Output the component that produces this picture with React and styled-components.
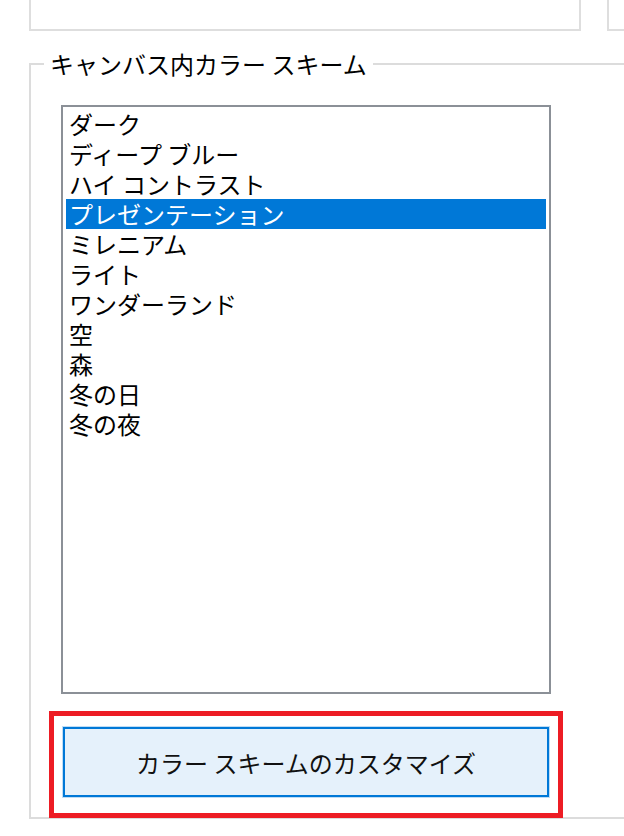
import React from "react";
import styled, { createGlobalStyle } from "styled-components";

const GlobalStyle = createGlobalStyle`
  html, body {
    margin: 0;
    padding: 0;
    background: #ffffff;
  }
  body {
    font-family: "Noto Sans CJK JP", "Noto Sans", sans-serif;
    color: #000000;
  }
`;

const schemes = [
  "ダーク",
  "ディープ ブルー",
  "ハイ コントラスト",
  "プレゼンテーション",
  "ミレニアム",
  "ライト",
  "ワンダーランド",
  "空",
  "森",
  "冬の日",
  "冬の夜"
];

const Page = styled.div`
  width: 624px;
  height: 836px;
  overflow: hidden;
  padding-left: 29px;
  box-sizing: border-box;
`;

const TopRow = styled.div`
  display: flex;
  gap: 26px;
`;

const TopPanel = styled.div`
  flex: 0 0 auto;
  width: ${({ width }) => width}px;
  height: 31px;
  box-sizing: border-box;
  border: 2px solid #dedede;
  border-top: none;
`;

const Group = styled.fieldset`
  margin: 18px -40px 0 0;
  padding: 0;
  border: 2px solid #dcdcdc;
  min-width: 0;
  box-sizing: border-box;
  height: 770px;
`;

const Legend = styled.legend`
  margin-left: 13px;
  padding: 0 6px;
  font-size: 24px;
  line-height: 30px;
  color: #000000;
`;

const ListBox = styled.div`
  width: 490px;
  height: 589px;
  margin: 26px 0 0 30px;
  box-sizing: border-box;
  border: 2px solid #8b9097;
  padding: 2px 3px;
  background: #ffffff;
`;

const Item = styled.div`
  height: 30px;
  line-height: 30px;
  padding-left: 3px;
  font-size: 24px;
  white-space: nowrap;
  background: ${({ selected }) => (selected ? "#0078d7" : "transparent")};
  color: ${({ selected }) => (selected ? "#ffffff" : "#000000")};
`;

const Highlight = styled.div`
  width: 514px;
  margin: 17px 0 0 18px;
  box-sizing: border-box;
  border: 5px solid #ed1c24;
  padding: 11px 9px 16px;
`;

const Button = styled.button`
  display: block;
  width: 486px;
  height: 70px;
  box-sizing: border-box;
  border: 2px solid #0078d7;
  box-shadow: 0 0 0 1px rgba(0, 120, 215, 0.25);
  background: #e5f1fb;
  font-family: inherit;
  font-size: 24px;
  color: #111111;
  padding: 0;
  cursor: pointer;
`;

export default function App() {
  return (
    <>
      <GlobalStyle />
      <Page>
        <TopRow>
          <TopPanel width={552} />
          <TopPanel width={60} />
        </TopRow>
        <Group>
          <Legend>キャンバス内カラー スキーム</Legend>
          <ListBox role="listbox">
            {schemes.map((name, i) => (
              <Item key={name} selected={i === 3} role="option">
                {name}
              </Item>
            ))}
          </ListBox>
          <Highlight>
            <Button>カラー スキームのカスタマイズ</Button>
          </Highlight>
        </Group>
      </Page>
    </>
  );
}
